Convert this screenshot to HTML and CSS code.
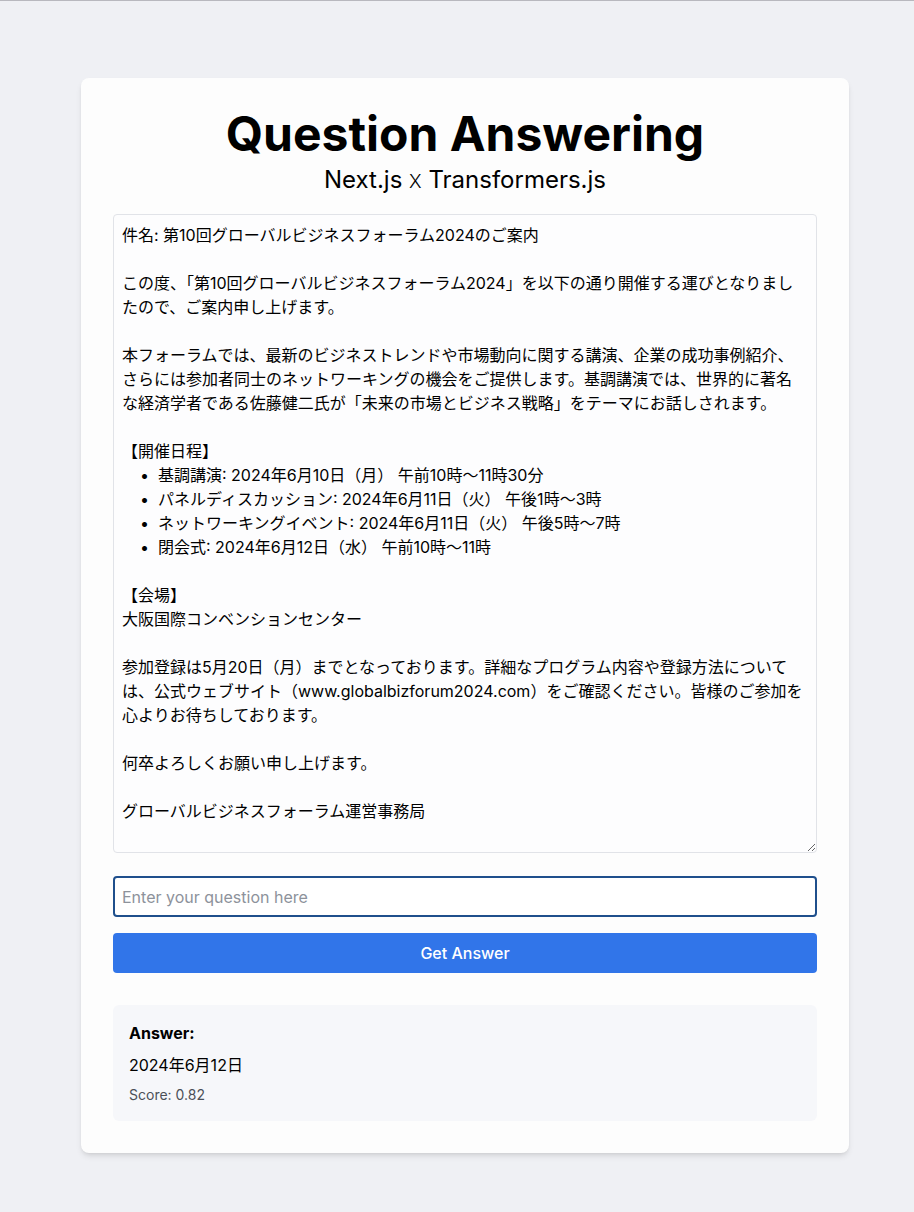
FILE: index.html
```html
<!DOCTYPE html>
<html lang="ja">
<head>
<meta charset="utf-8">
<title>Question Answering</title>
<link rel="stylesheet" href="styles.css">
</head>
<body>
<div class="page">
  <main class="card">
    <h1 class="title">Question Answering</h1>
    <p class="subtitle">Next.js <span class="times">X</span> Transformers.js</p>
    <textarea class="context">件名: 第10回グローバルビジネスフォーラム2024のご案内

この度、「第10回グローバルビジネスフォーラム2024」を以下の通り開催する運びとなりましたので、ご案内申し上げます。

本フォーラムでは、最新のビジネストレンドや市場動向に関する講演、企業の成功事例紹介、さらには参加者同士のネットワーキングの機会をご提供します。基調講演では、世界的に著名な経済学者である佐藤健二氏が「未来の市場とビジネス戦略」をテーマにお話しされます。

【開催日程】
    •  基調講演: 2024年6月10日（月） 午前10時〜11時30分
    •  パネルディスカッション: 2024年6月11日（火） 午後1時〜3時
    •  ネットワーキングイベント: 2024年6月11日（火） 午後5時〜7時
    •  閉会式: 2024年6月12日（水） 午前10時〜11時

【会場】
大阪国際コンベンションセンター

参加登録は5月20日（月）までとなっております。詳細なプログラム内容や登録方法については、公式ウェブサイト（www.globalbizforum2024.com）をご確認ください。皆様のご参加を心よりお待ちしております。

何卒よろしくお願い申し上げます。

グローバルビジネスフォーラム運営事務局</textarea>
    <input class="question" type="text" placeholder="Enter your question here">
    <button class="submit" type="button">Get Answer</button>
    <section class="answer">
      <h2 class="answer-label">Answer:</h2>
      <p class="answer-text">2024年6月12日</p>
      <p class="answer-score">Score: 0.82</p>
    </section>
  </main>
</div>
</body>
</html>
```
FILE: styles.css
```css
* { box-sizing: border-box; }
html, body { margin: 0; padding: 0; }
body {
  background: #eff0f4;
  border-top: 1px solid #b8b8be;
  font-family: "Inter", "Noto Sans CJK JP", sans-serif;
  color: #000;
  min-height: 1212px;
}
.page {
  padding: 77px 0 0 81px;
}
.card {
  width: 768px;
  background: #fdfdfd;
  border-radius: 8px;
  padding: 32px;
  box-shadow: 0 4px 6px -1px rgba(0,0,0,0.1), 0 2px 4px -2px rgba(0,0,0,0.1);
  display: flex;
  flex-direction: column;
}
.title {
  margin: 0 0 6px;
  font-size: 48px;
  line-height: 48px;
  font-weight: 700;
  text-align: center;
}
.subtitle {
  margin: 0 0 16px;
  font-size: 24px;
  line-height: 32px;
  text-align: center;
}
.times {
  font-size: 19px;
  font-weight: 300;
}
.context {
  display: block;
  width: 100%;
  height: 639px;
  margin: 0 0 23px;
  padding: 8px 12px 8px 8px;
  border: 1px solid #e1e3e8;
  border-radius: 4px;
  background: #fdfdfe;
  font-family: "Inter", "Noto Sans CJK JP", sans-serif;
  font-size: 16px;
  line-height: 24px;
  color: #000;
  resize: both;
}
.question {
  display: block;
  width: 100%;
  height: 41px;
  margin: 0 0 16px;
  padding: 0 7px;
  border: 2px solid #1f4f8c;
  border-radius: 4px;
  background: #fff;
  font-family: "Inter", "Noto Sans CJK JP", sans-serif;
  font-size: 16px;
  outline: none;
}
.question::placeholder { color: #8d929b; }
.submit {
  display: block;
  width: 100%;
  height: 40px;
  border: none;
  border-radius: 4px;
  background: #3175e9;
  color: #fff;
  font-family: "Inter", sans-serif;
  font-size: 16px;
  font-weight: 500;
}
.answer {
  margin-top: 32px;
  background: #f6f7fa;
  border-radius: 6px;
  padding: 16px;
}
.answer-label {
  margin: 0 0 8px;
  font-size: 16px;
  line-height: 24px;
  font-weight: 700;
}
.answer-text {
  margin: 0 0 8px;
  font-size: 16px;
  line-height: 24px;
}
.answer-score {
  margin: 0;
  font-size: 14px;
  line-height: 20px;
  color: #4b5058;
}
```
